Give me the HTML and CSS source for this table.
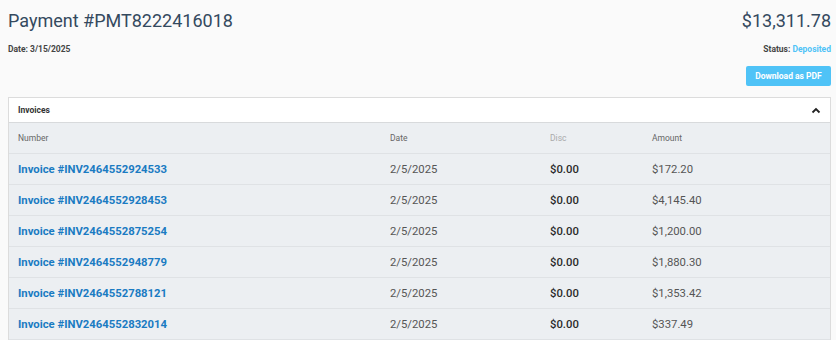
FILE: index.html
```
<!DOCTYPE html>
<html>
<head>
<meta charset="utf-8">
<link rel="stylesheet" href="styles.css">
</head>
<body>
<div class="page">
  <div class="top">
    <h1 class="title">Payment #PMT8222416018</h1>
    <div class="total">$13,311.78</div>
  </div>
  <div class="meta">
    <div class="date">Date: 3/15/2025</div>
    <div class="status">Status: <span class="dep">Deposited</span></div>
  </div>
  <div class="actions">
    <button class="btn">Download as PDF</button>
  </div>
  <div class="card">
    <div class="card-head">
      <span>Invoices</span>
      <svg class="chev" width="10" height="7" viewBox="0 0 10 7"><path d="M1.5 5.5 L5 2 L8.5 5.5" fill="none" stroke="#222" stroke-width="1.8"/></svg>
    </div>
    <table class="tbl">
      <thead>
        <tr><th class="c1">Number</th><th class="c2">Date</th><th class="c3 muted">Disc</th><th class="c4">Amount</th></tr>
      </thead>
      <tbody>
        <tr><td><a class="inv">Invoice #INV2464552924533</a></td><td class="dt">2/5/2025</td><td class="disc">$0.00</td><td class="amt">$172.20</td></tr>
        <tr><td><a class="inv">Invoice #INV2464552928453</a></td><td class="dt">2/5/2025</td><td class="disc">$0.00</td><td class="amt">$4,145.40</td></tr>
        <tr><td><a class="inv">Invoice #INV2464552875254</a></td><td class="dt">2/5/2025</td><td class="disc">$0.00</td><td class="amt">$1,200.00</td></tr>
        <tr><td><a class="inv">Invoice #INV2464552948779</a></td><td class="dt">2/5/2025</td><td class="disc">$0.00</td><td class="amt">$1,880.30</td></tr>
        <tr><td><a class="inv">Invoice #INV2464552788121</a></td><td class="dt">2/5/2025</td><td class="disc">$0.00</td><td class="amt">$1,353.42</td></tr>
        <tr><td><a class="inv">Invoice #INV2464552832014</a></td><td class="dt">2/5/2025</td><td class="disc">$0.00</td><td class="amt">$337.49</td></tr>
      </tbody>
    </table>
  </div>
</div>
</body>
</html>
```
FILE: styles.css
```
* { box-sizing: border-box; }
html, body { margin: 0; padding: 0; background: #fafafa; }
body { font-family: Roboto, "Liberation Sans", sans-serif; color: #333; }
.page { padding: 8px 5px 0 8px; }
.top { display: flex; justify-content: space-between; align-items: baseline; }
.title { margin: 0; font-size: 18px; font-weight: 400; color: #34495e; line-height: 26px; }
.total { font-size: 18px; color: #34495e; line-height: 26px; }
.meta { display: flex; justify-content: space-between; margin-top: 9px; font-size: 8.5px; font-weight: 700; color: #444; line-height: 12px; }
.dep { color: #4fc3f7; }
.actions { display: flex; justify-content: flex-end; margin-top: 11px; }
.btn { border: 0; background: #4fc3f7; color: #fff; font-family: inherit; font-weight: 700; font-size: 8.5px; height: 20px; width: 85px; border-radius: 2px; padding: 0; }
.card { margin-top: 11px; border: 1px solid #dcdcdc; background: #fff; }
.card-head { height: 25px; display: flex; align-items: center; justify-content: space-between; padding: 0 9px 0 9px; font-size: 8.5px; font-weight: 700; color: #333; border-bottom: 1px solid #d8dadc; }
.chev { display: block; }
.tbl { width: 100%; border-collapse: collapse; background: #eceff2; }
.tbl th { height: 30px; text-align: left; font-weight: 400; font-size: 8.5px; color: #666; padding: 0; border-bottom: 1px solid #dfe2e5; }
.tbl th.muted { color: #aaa; }
.c1 { padding-left: 9px !important; width: 381px; }
.c2 { width: 160px; }
.c3 { width: 102px; }
.tbl td { height: 31px; padding: 2px 0 0 0; border-bottom: 1px solid #dfe2e5; font-size: 11.3px; }
.tbl td:first-child { padding-left: 9px; }
.inv { color: #1a7bc2; font-weight: 700; font-size: 11.3px; }
.dt { color: #555; }
.disc { color: #2a2a2a; font-weight: 500; }
.amt { color: #555; }
```
